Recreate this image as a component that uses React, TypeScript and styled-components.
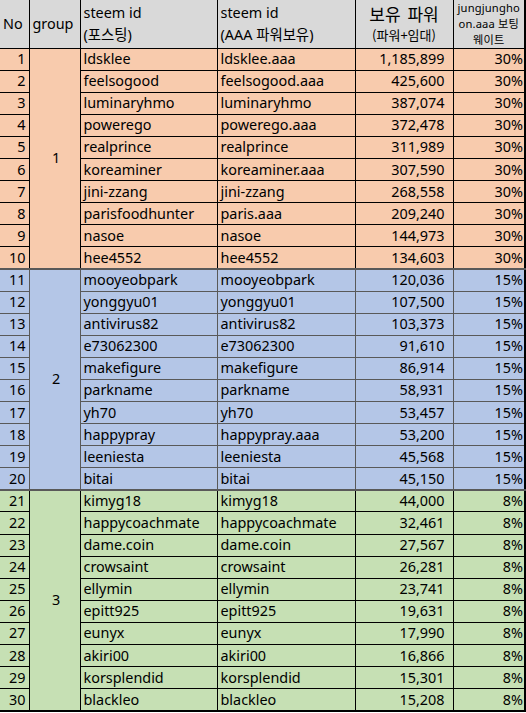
import React from "react";
import styled, { createGlobalStyle, css } from "styled-components";

type Group = 1 | 2 | 3;

interface Row {
  no: number;
  posting: string;
  holder: string;
  power: string;
  weight: string;
}

const GlobalStyle = createGlobalStyle`
  body {
    margin: 0;
    background: #fff;
    font-family: "Noto Sans", "Noto Sans CJK KR", sans-serif;
  }
`;

const fills: Record<Group, string> = {
  1: "#f8cbad",
  2: "#b4c6e7",
  3: "#c6e0b4",
};

const lines: Record<Group, string> = {
  1: "#000",
  2: "#595959",
  3: "#000",
};

const Sheet = styled.table`
  border-collapse: collapse;
  table-layout: fixed;
  width: 525px;
  color: #000;
  font-size: 14.4px;
  border-right: 2px solid #000;
  border-bottom: 2px solid #000;
`;

const HeadRow = styled.tr`
  height: 48px;
  background: #d9d9d9;
`;

const Head = styled.th<{ $align?: "left" | "center" }>`
  border: 1px solid #000;
  border-top: none;
  padding: 0 3px;
  font-weight: normal;
  text-align: ${(p) => p.$align ?? "left"};
  vertical-align: middle;
  line-height: 21px;
  white-space: nowrap;
  &:first-child { border-left: none; }
`;

const Korean = styled.span`
  font-family: "Noto Sans CJK KR", "Noto Sans", sans-serif;
`;

const PowerTitle = styled.div`
  font-family: "Noto Sans CJK KR", sans-serif;
  font-size: 17px;
  line-height: 22px;
  word-spacing: 3px;
`;

const PowerSub = styled.div`
  font-family: "Noto Sans CJK KR", sans-serif;
  font-size: 13px;
  line-height: 20px;
`;

const WeightTitle = styled.div`
  display: flex;
  flex-direction: column;
  align-items: center;
  margin: 0 -3px;
  font-size: 11.2px;
  letter-spacing: 0.15px;
  font-family: "Noto Sans", "Noto Sans CJK KR", sans-serif;
`;

const WeightLine = styled.span`
  display: block;
  height: 15.6px;
  line-height: 15.6px;
  white-space: nowrap;
`;

const BodyRow = styled.tr<{ $group: Group; $first: boolean }>`
  height: 22.1px;
  background: ${(p) => fills[p.$group]};
  ${(p) =>
    p.$first &&
    p.$group !== 1 &&
    css`
      & > td { border-top: 2px solid #595959; }
    `}
`;

const Cell = styled.td<{ $group: Group; $align?: "left" | "right" | "center"; $pad?: number }>`
  border: 1px solid ${(p) => lines[p.$group]};
  padding: 0 ${(p) => (p.$align === "right" ? `${p.$pad ?? 3}px 0 0` : "0 0 3px")};
  text-align: ${(p) => p.$align ?? "left"};
  vertical-align: middle;
  white-space: nowrap;
  overflow: hidden;
  line-height: 20px;
  &:first-child { border-left: none; }
`;

const rows: Row[] = [
  { no: 1, posting: "ldsklee", holder: "ldsklee.aaa", power: "1,185,899", weight: "30%" },
  { no: 2, posting: "feelsogood", holder: "feelsogood.aaa", power: "425,600", weight: "30%" },
  { no: 3, posting: "luminaryhmo", holder: "luminaryhmo", power: "387,074", weight: "30%" },
  { no: 4, posting: "powerego", holder: "powerego.aaa", power: "372,478", weight: "30%" },
  { no: 5, posting: "realprince", holder: "realprince", power: "311,989", weight: "30%" },
  { no: 6, posting: "koreaminer", holder: "koreaminer.aaa", power: "307,590", weight: "30%" },
  { no: 7, posting: "jini-zzang", holder: "jini-zzang", power: "268,558", weight: "30%" },
  { no: 8, posting: "parisfoodhunter", holder: "paris.aaa", power: "209,240", weight: "30%" },
  { no: 9, posting: "nasoe", holder: "nasoe", power: "144,973", weight: "30%" },
  { no: 10, posting: "hee4552", holder: "hee4552", power: "134,603", weight: "30%" },
  { no: 11, posting: "mooyeobpark", holder: "mooyeobpark", power: "120,036", weight: "15%" },
  { no: 12, posting: "yonggyu01", holder: "yonggyu01", power: "107,500", weight: "15%" },
  { no: 13, posting: "antivirus82", holder: "antivirus82", power: "103,373", weight: "15%" },
  { no: 14, posting: "e73062300", holder: "e73062300", power: "91,610", weight: "15%" },
  { no: 15, posting: "makefigure", holder: "makefigure", power: "86,914", weight: "15%" },
  { no: 16, posting: "parkname", holder: "parkname", power: "58,931", weight: "15%" },
  { no: 17, posting: "yh70", holder: "yh70", power: "53,457", weight: "15%" },
  { no: 18, posting: "happypray", holder: "happypray.aaa", power: "53,200", weight: "15%" },
  { no: 19, posting: "leeniesta", holder: "leeniesta", power: "45,568", weight: "15%" },
  { no: 20, posting: "bitai", holder: "bitai", power: "45,150", weight: "15%" },
  { no: 21, posting: "kimyg18", holder: "kimyg18", power: "44,000", weight: "8%" },
  { no: 22, posting: "happycoachmate", holder: "happycoachmate", power: "32,461", weight: "8%" },
  { no: 23, posting: "dame.coin", holder: "dame.coin", power: "27,567", weight: "8%" },
  { no: 24, posting: "crowsaint", holder: "crowsaint", power: "26,281", weight: "8%" },
  { no: 25, posting: "ellymin", holder: "ellymin", power: "23,741", weight: "8%" },
  { no: 26, posting: "epitt925", holder: "epitt925", power: "19,631", weight: "8%" },
  { no: 27, posting: "eunyx", holder: "eunyx", power: "17,990", weight: "8%" },
  { no: 28, posting: "akiri00", holder: "akiri00", power: "16,866", weight: "8%" },
  { no: 29, posting: "korsplendid", holder: "korsplendid", power: "15,301", weight: "8%" },
  { no: 30, posting: "blackleo", holder: "blackleo", power: "15,208", weight: "8%" },
];

function groupOf(no: number): Group {
  if (no <= 10) return 1;
  if (no <= 20) return 2;
  return 3;
}

export default function App() {
  return (
    <>
      <GlobalStyle />
      <Sheet>
        <colgroup>
          <col style={{ width: 29 }} />
          <col style={{ width: 51 }} />
          <col style={{ width: 137 }} />
          <col style={{ width: 138 }} />
          <col style={{ width: 98 }} />
          <col style={{ width: 72 }} />
        </colgroup>
        <thead>
          <HeadRow>
            <Head>No</Head>
            <Head>group</Head>
            <Head>
              steem id
              <br />
              (<Korean>포스팅</Korean>)
            </Head>
            <Head>
              steem id
              <br />
              (AAA <Korean>파워보유</Korean>)
            </Head>
            <Head $align="center">
              <PowerTitle>보유 파워</PowerTitle>
              <PowerSub>(파워+임대)</PowerSub>
            </Head>
            <Head $align="center">
              <WeightTitle>
                <WeightLine>jungjungho</WeightLine>
                <WeightLine>
                  on.aaa <Korean>보팅</Korean>
                </WeightLine>
                <WeightLine>
                  <Korean>웨이트</Korean>
                </WeightLine>
              </WeightTitle>
            </Head>
          </HeadRow>
        </thead>
        <tbody>
          {rows.map((r) => {
            const g = groupOf(r.no);
            const first = r.no % 10 === 1;
            return (
              <BodyRow key={r.no} $group={g} $first={first}>
                <Cell $group={g} $align="right" $pad={3}>{r.no}</Cell>
                {first && (
                  <Cell $group={g} $align="center" rowSpan={10}>
                    {g}
                  </Cell>
                )}
                <Cell $group={g}>{r.posting}</Cell>
                <Cell $group={g}>{r.holder}</Cell>
                <Cell $group={g} $align="right" $pad={8}>{r.power}</Cell>
                <Cell $group={g} $align="right" $pad={1}>{r.weight}</Cell>
              </BodyRow>
            );
          })}
        </tbody>
      </Sheet>
    </>
  );
}
